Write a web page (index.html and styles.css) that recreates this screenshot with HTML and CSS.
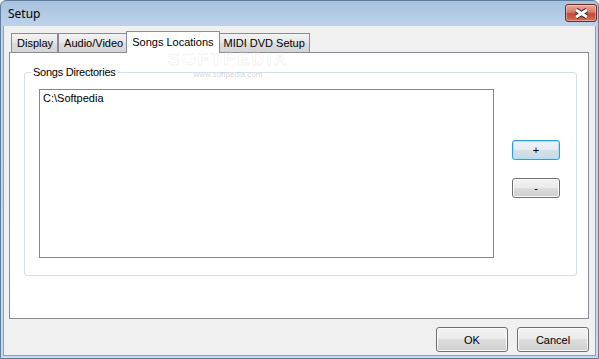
FILE: index.html
```html
<!DOCTYPE html>
<html lang="en">
<head>
    <meta charset="UTF-8">
    <meta name="viewport" content="width=device-width, initial-scale=1.0">
    <title>Setup</title>
    <link rel="stylesheet" href="styles.css">
</head>

<body>
    <div class="window">
        <div class="titlebar">
            <span class="title">Setup</span>
            <button class="close" type="button">
                <svg width="17" height="11" viewBox="0 0 17 11">
                    <path d="M3 2 L14 9 M14 2 L3 9" stroke="#4a2320" stroke-width="5" fill="none"/>
                    <path d="M3 2 L14 9 M14 2 L3 9" stroke="#ffffff" stroke-width="3" fill="none"/>
                </svg>
            </button>
        </div>

        <div class="client">
            <div class="tabs">
                <div class="tab">Display</div>
                <div class="tab">Audio/Video</div>
                <div class="tab active">Songs Locations</div>
                <div class="tab">MIDI DVD Setup</div>
            </div>

            <div class="panel">
                <fieldset class="group">
                    <legend>Songs Directories</legend>
                    <div class="list">
                        <div class="item">C:\Softpedia</div>
                    </div>
                    <div class="side">
                        <button class="btn small focused" type="button">+</button>
                        <button class="btn small" type="button">-</button>
                    </div>
                </fieldset>
            </div>

            <div class="footer">
                <button class="btn wide" type="button">OK</button>
                <button class="btn wide" type="button">Cancel</button>
            </div>
        </div>

        <div class="watermark">
            <div class="wm-big">SOFTPEDIA</div>
            <div class="wm-small">www.softpedia.com</div>
        </div>
    </div>
</body>
</html>
```

FILE: styles.css
```css
body {
    margin: 0;
    padding: 0;
    font-family: "Liberation Sans", Arial, sans-serif;
    font-size: 11px;
    color: #000;
}

.window {
    position: relative;
    width: 599px;
    height: 359px;
    box-sizing: border-box;
    display: flex;
    flex-direction: column;
    padding: 0 2px 2px;
    border: 1px solid #5f7d9c;
    border-radius: 6px 6px 0 0;
    background: linear-gradient(#a8c2de, #bdd3ea 26px, #c4d9ee);
}

.titlebar {
    height: 25px;
    display: flex;
    justify-content: space-between;
    align-items: flex-start;
    padding-left: 5px;
}

.title {
    font-family: "Noto Sans", sans-serif;
    font-size: 12px;
    line-height: 16px;
    margin-top: 5px;
    color: #000;
}

.close {
    width: 32px;
    height: 18px;
    margin-top: 3px;
    margin-right: -1px;
    padding: 0;
    display: flex;
    align-items: center;
    justify-content: center;
    border: 1px solid #6d2b25;
    border-radius: 3px;
    background: linear-gradient(#e8a99c, #d77a69 45%, #c44a36 55%, #d2715c);
    box-shadow: inset 0 0 0 1px rgba(255, 255, 255, 0.35);
}

.client {
    flex: 1;
    display: flex;
    flex-direction: column;
    padding: 5px 6px 3px 5px;
    background-color: #f0f0f0;
    border: 1px solid #7fa4cc;
    border-top: none;
}

.tabs {
    height: 21px;
    display: flex;
    align-items: flex-end;
    padding-left: 2px;
}

.tab {
    height: 19px;
    box-sizing: border-box;
    padding: 3px 4px 0 5px;
    line-height: 12px;
    border: 1px solid #898c95;
    border-bottom: none;
    background: linear-gradient(#f3f3f3, #e6e6e6 50%, #dcdcdc 50%, #d5d5d5);
    white-space: nowrap;
}

.tab.active {
    position: relative;
    z-index: 1;
    height: 22px;
    margin: 0 -2px -1px;
    padding: 4px 5px 0;
    background: #fff;
}

.panel {
    flex: 1;
    padding: 13px 11px 0 14px;
    border: 1px solid #898c95;
    background-color: #fff;
}

.group {
    display: flex;
    margin: 0;
    padding: 10px 0 17px 14px;
    border: 1px solid #d5dfe5;
    border-radius: 3px;
}

.group legend {
    margin-left: -8px;
    padding: 0 2px;
    line-height: 13px;
    letter-spacing: -0.25px;
}

.list {
    width: 455px;
    height: 169px;
    box-sizing: border-box;
    padding: 2px 3px;
    border: 1px solid #828790;
    background-color: #fff;
}

.item {
    line-height: 13px;
}

.side {
    display: flex;
    flex-direction: column;
    gap: 18px;
    margin-left: 18px;
    padding-top: 51px;
}

.btn {
    box-sizing: border-box;
    padding: 0;
    font-family: "Liberation Sans", Arial, sans-serif;
    font-size: 11px;
    color: #000;
    border: 1px solid #707070;
    border-radius: 3px;
    background: linear-gradient(#f2f2f2, #ebebeb 50%, #dddddd 50%, #cfcfcf);
    box-shadow: inset 0 0 0 1px #fbfbfb;
}

.btn.small {
    width: 48px;
    height: 20px;
}

.btn.focused {
    border-color: #2e9fdb;
    background: linear-gradient(#eef3f7, #e4ecf2 50%, #d5e1e9 50%, #cbd9e3);
    box-shadow: inset 0 0 0 1px #a6e3fa;
}

.footer {
    display: flex;
    justify-content: flex-end;
    gap: 9px;
    margin-top: 8px;
}

.btn.wide {
    width: 72px;
    height: 25px;
}

.watermark {
    position: absolute;
    left: 162px;
    top: 51px;
    width: 130px;
    pointer-events: none;
    text-align: center;
}

.wm-big {
    font-size: 18px;
    line-height: 14px;
    font-weight: bold;
    letter-spacing: 2px;
    color: rgba(255, 255, 255, 0.2);
    -webkit-text-stroke: 1px rgba(0, 0, 0, 0.07);
}

.wm-small {
    margin-top: 4px;
    font-size: 8px;
    line-height: 9px;
    color: rgba(0, 0, 0, 0.2);
}
```
